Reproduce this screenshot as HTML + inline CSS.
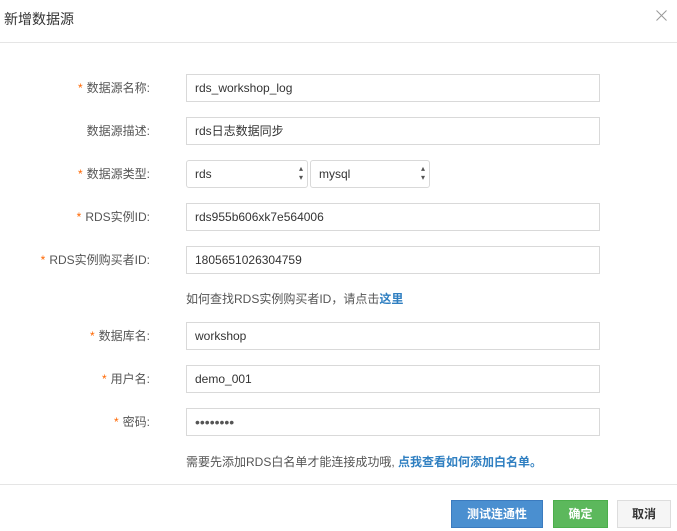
<!DOCTYPE html><html><head><meta charset="utf-8"><style>
*{box-sizing:border-box;margin:0;padding:0}
body{width:677px;height:531px;background:#fff;font-family:"Liberation Sans","Noto Sans CJK SC",sans-serif;font-size:12px;color:#333;position:relative;overflow:hidden}
.a{position:absolute}
.t{left:4px;top:9px;font-size:14px;color:#333}
.x{left:656px;top:10px}
.hl{left:0;width:677px;height:1px;background:#e5e5e5}
.lb{right:527px;text-align:right;color:#555;line-height:28px;white-space:nowrap}
.lb i{color:#f60;font-style:normal;margin-right:4px}
.in{left:186px;width:414px;height:28px;border:1px solid #d9d9d9;line-height:26px;padding-left:8px;color:#333}
.sel{height:28px;border:1px solid #d9d9d9;border-radius:3px;line-height:26px;padding-left:8px}
.sel:after{content:"▴";position:absolute;right:4px;top:4px;font-size:8px;color:#555;line-height:8px}
.sel:before{content:"▾";position:absolute;right:4px;top:13px;font-size:8px;color:#555;line-height:8px}
.hint{left:186px;color:#555}
.hint b{color:#2f7fc1}
.btn{top:500px;height:28px;line-height:26px;text-align:center;color:#fff;font-weight:bold;font-size:12px}
</style></head><body>
<div class="a t">新增数据源</div>
<svg class="a x" width="11" height="11" viewBox="0 0 11 11"><path d="M0.5 0.5L10.5 10.5M10.5 0.5L0.5 10.5" stroke="#999" stroke-width="1" fill="none"/></svg>
<div class="a hl" style="top:42px"></div>

<div class="a lb" style="top:74px"><i>*</i>数据源名称:</div>
<div class="a in" style="top:74px">rds_workshop_log</div>
<div class="a lb" style="top:117px">数据源描述:</div>
<div class="a in" style="top:117px">rds日志数据同步</div>
<div class="a lb" style="top:160px"><i>*</i>数据源类型:</div>
<div class="a sel" style="top:160px;left:186px;width:122px">rds</div>
<div class="a sel" style="top:160px;left:310px;width:120px">mysql</div>
<div class="a lb" style="top:203px"><i>*</i>RDS实例ID:</div>
<div class="a in" style="top:203px">rds955b606xk7e564006</div>
<div class="a lb" style="top:246px"><i>*</i>RDS实例购买者ID:</div>
<div class="a in" style="top:246px">1805651026304759</div>
<div class="a hint" style="top:290px">如何查找RDS实例购买者ID，请点击<b>这里</b></div>
<div class="a lb" style="top:322px"><i>*</i>数据库名:</div>
<div class="a in" style="top:322px">workshop</div>
<div class="a lb" style="top:365px"><i>*</i>用户名:</div>
<div class="a in" style="top:365px">demo_001</div>
<div class="a lb" style="top:408px"><i>*</i>密码:</div>
<div class="a in" style="top:408px;font-size:14px;color:#555">••••••••</div>
<div class="a hint" style="top:453px">需要先添加RDS白名单才能连接成功哦, <b>点我查看如何添加白名单。</b></div>
<div class="a hl" style="top:484px"></div>
<div class="a btn" style="left:451px;width:92px;background:#4a8fd0;border:1px solid #3b7bbf">测试连通性</div>
<div class="a btn" style="left:553px;width:55px;background:#5cb85c;border:1px solid #4cae4c">确定</div>
<div class="a btn" style="left:617px;width:54px;background:#f5f5f5;border:1px solid #ddd;color:#333">取消</div>
</body></html>
